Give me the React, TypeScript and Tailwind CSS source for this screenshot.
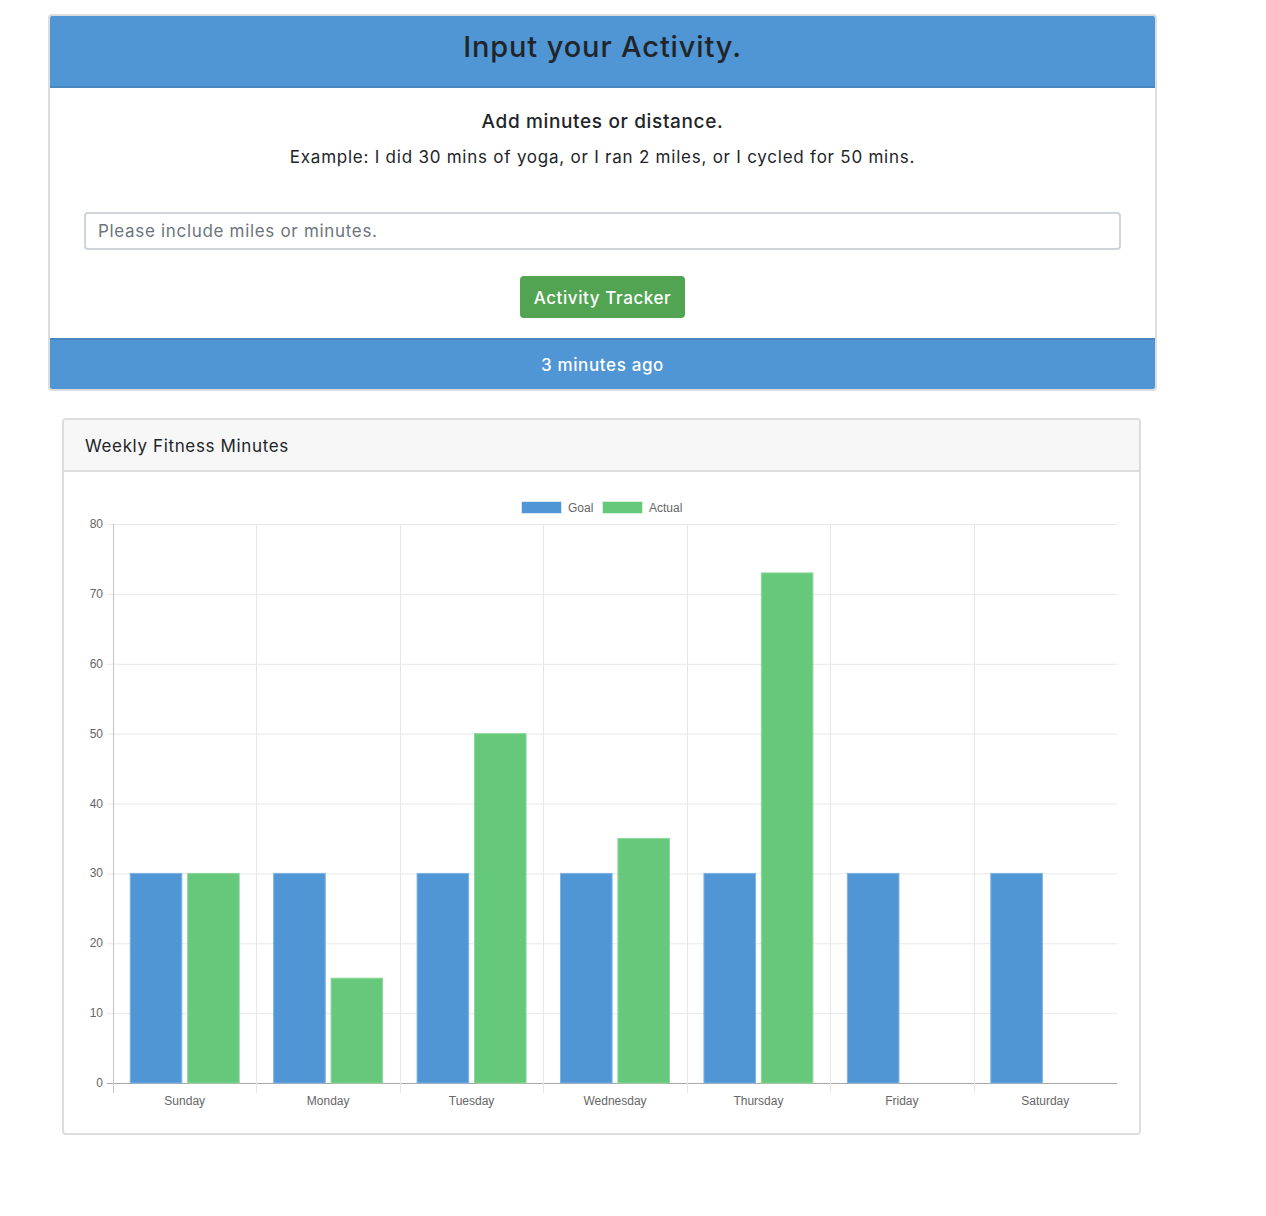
import React from "react";

const days = ["Sunday", "Monday", "Tuesday", "Wednesday", "Thursday", "Friday", "Saturday"];
const goal = [30, 30, 30, 30, 30, 30, 30];
const actual = [30, 15, 50, 35, 73, 0, 0];

// chart geometry in page coordinates (svg is shifted by the body origin)
const left = 113;
const right = 1117;
const top = 524;
const bottom = 1083;
const yFor = (v: number) => bottom - ((bottom - top) * v) / 80;
const colW = (right - left) / 7;

const FitnessChart = () => {
  return (
    <svg
      width={1075}
      height={661}
      className="block tracking-normal"
      style={{ fontFamily: '"Liberation Sans", Arial, sans-serif' }}
    >
      <g transform="translate(-64,-472)">
        {/* legend */}
        <rect x={521.5} y={501.5} width={40} height={12} fill="#5096d4" stroke="#d9e6f3" />
        <text x={568} y={512} fontSize={12} fill="#666">Goal</text>
        <rect x={602.5} y={501.5} width={40} height={12} fill="#66c87a" stroke="#d9f0de" />
        <text x={649} y={512} fontSize={12} fill="#666">Actual</text>

        {/* horizontal grid + y labels */}
        {[0, 10, 20, 30, 40, 50, 60, 70, 80].map((v) => (
          <g key={v}>
            <line
              x1={107}
              x2={right}
              y1={yFor(v) + 0.5}
              y2={yFor(v) + 0.5}
              stroke={v === 0 ? "#a8a8a8" : "#e8e8e8"}
            />
            <text x={103} y={yFor(v) + 4} fontSize={12} fill="#666" textAnchor="end">
              {v}
            </text>
          </g>
        ))}

        {/* vertical grid */}
        {[0, 1, 2, 3, 4, 5, 6].map((i) => (
          <line
            key={i}
            x1={Math.round(left + colW * i) + 0.5}
            x2={Math.round(left + colW * i) + 0.5}
            y1={top}
            y2={1093}
            stroke={i === 0 ? "#c4c4c4" : "#e6e6e6"}
          />
        ))}

        {/* bars */}
        {days.map((d, i) => {
          const c = left + colW * i + colW / 2;
          const bw = 51.6;
          return (
            <g key={d}>
              <rect
                x={c - 57.4 + 2.9}
                y={yFor(goal[i])}
                width={bw}
                height={bottom - yFor(goal[i])}
                fill="#5096d4"
                stroke="#7fb3e2"
                strokeWidth={1}
              />
              {actual[i] > 0 && (
                <rect
                  x={c + 2.9}
                  y={yFor(actual[i])}
                  width={bw}
                  height={bottom - yFor(actual[i])}
                  fill="#66c87a"
                  stroke="#8fd79d"
                  strokeWidth={1}
                />
              )}
              <text x={c} y={1105} fontSize={12} fill="#666" textAnchor="middle">
                {d}
              </text>
            </g>
          );
        })}
      </g>
    </svg>
  );
};

export default function App() {
  return (
    <div className="min-h-[1216px] bg-white pt-[14px] text-[#212529] tracking-[0.04em]" style={{ fontFamily: 'Inter, "Open Sans", sans-serif' }}>
      <div className="ml-[48px] w-[1109px] overflow-hidden rounded border-2 border-[#dddddd]">
        <div className="flex h-[72px] items-center justify-center border-b-2 border-[#4786bf] bg-[#5096d4] pb-[8px]">
          <h1 className="text-[29px] font-medium tracking-[0.03em]">Input your Activity.</h1>
        </div>
        <div className="flex flex-col items-center px-[34px] pt-[20px] pb-[20px]">
          <h2 className="text-[19px] font-medium">Add minutes or distance.</h2>
          <p className="mt-[8px] text-[17px] tracking-[0.045em]">Example: I did 30 mins of yoga, or I ran 2 miles, or I cycled for 50 mins.</p>
          <input
            className="mt-[42px] h-[38px] w-full rounded border-2 border-[#ced4da] px-3 text-[17px] tracking-[0.04em] placeholder:text-[#6c757d]"
            placeholder="Please include miles or minutes."
          />
          <button className="mt-[26px] h-[42px] rounded bg-[#52a452] px-[14px] pt-[3px] text-[17px] font-medium tracking-[0.035em] text-white">
            Activity Tracker
          </button>
        </div>
        <div className="flex h-[51px] items-center justify-center border-t-2 border-[#4786bf] bg-[#5096d4] pt-[3px]">
          <span className="text-[17px] font-medium text-white">3 minutes ago</span>
        </div>
      </div>

      <div className="mt-[27px] ml-[62px] w-[1079px] overflow-hidden rounded border-2 border-[#dddddd]">
        <div className="flex h-[52px] items-center border-b-2 border-[#dddddd] bg-[#f7f7f7] px-[21px] pt-[4px]">
          <span className="text-[17px]">Weekly Fitness Minutes</span>
        </div>
        <FitnessChart />
      </div>
    </div>
  );
}
